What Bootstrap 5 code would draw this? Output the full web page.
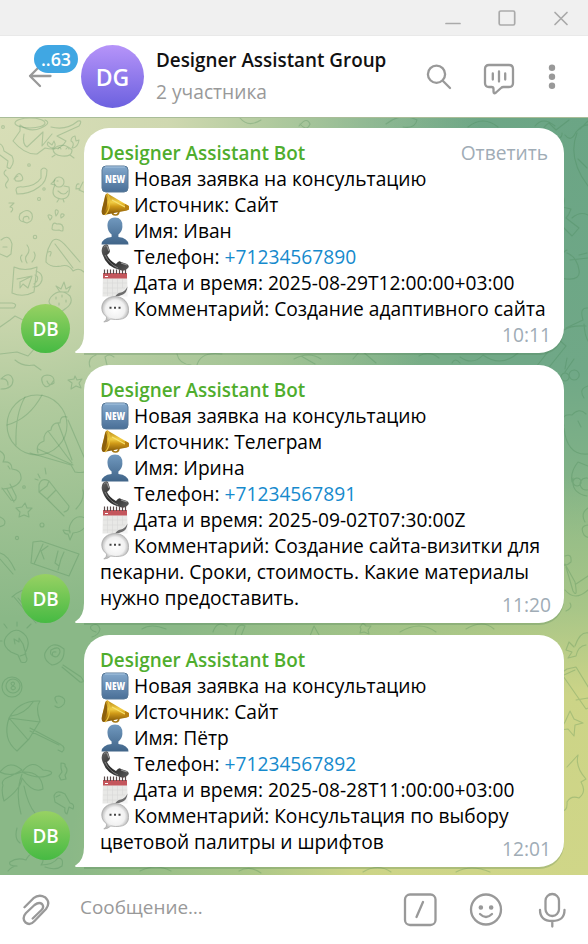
<!DOCTYPE html>
<html lang="ru">
<head>
<meta charset="utf-8">
<meta name="viewport" content="width=device-width, initial-scale=1">
<title>Designer Assistant Group</title>
<link href="https://cdn.jsdelivr.net/npm/bootstrap@5.3.0/dist/css/bootstrap.min.css" rel="stylesheet">
<style>
body{font-family:"Open Sans","Noto Sans",sans-serif;font-size:19.2px;line-height:26px;color:#000;background:#fff}
.app{width:588px;height:944px}
.titlebar{height:36px;background:#f0f0f0;border-bottom:1px solid #e9e9e9;padding-right:18px;gap:36px}
.topbar{height:81px;padding-left:28px;padding-right:32px}
.back{width:53px;height:63px}
.unread{left:6px;top:0;width:44px;height:28px;border-radius:14px;background:#40a7e3;color:#fff;font-size:17.8px;line-height:29px;font-weight:600}
.ava-lg{width:63px;height:63px;background:linear-gradient(#b694f9,#6c61df);color:#fff;font-size:23px;font-weight:600}
.ttl{font-weight:600;font-size:18.85px;line-height:31px;color:#111}
.sub{color:#999;line-height:31px}
.heading{padding-bottom:2px}
.feed{height:758px;padding:10px 24px 8px 21px;gap:12px;border-top:1px solid #a9bd98;background:
 radial-gradient(ellipse 480px 500px at 0% 0%,#d8deb7 0%,#cfd8b0 35%,rgba(186,207,163,.8) 58%,rgba(150,190,145,0) 100%),
 radial-gradient(ellipse 520px 400px at 100% 100%,#d0d688 0%,#ccd487 45%,rgba(180,203,136,.7) 67%,rgba(140,184,136,0) 100%),
 radial-gradient(ellipse 380px 420px at 100% 0%,#6ba585 0%,#70a887 60%,rgba(125,175,138,0) 100%),#8ab887}
.doodles{left:0;top:0;width:588px;height:757px;fill:none;stroke:#3e7e4d;stroke-opacity:.26;stroke-width:1.1;stroke-linecap:round;stroke-linejoin:round}
.ava{width:49px;height:49px;background:linear-gradient(#98d163,#46ba43);color:#fff;font-size:18.85px;font-weight:600}
.raised{margin-bottom:7px}
.bubble{width:480px;margin-left:14px;padding:12px 16px;border-radius:25px 25px 25px 0;background:#fff;box-shadow:0 2px 0 rgba(70,120,80,.25)}
.roomy{padding-bottom:31px}
.tail{left:-9px;bottom:0;width:10px;height:20px}
.sender{color:#4fad2d;font-weight:600;font-size:18.9px}
.reply,.stamp{color:#a0acb6}
.stamp{right:13px;bottom:5px}
.emo{width:28px;height:28px;margin:-1px 5.5px -1px .5px;vertical-align:top}
.tel{color:#168acd}
.composer{height:69px;padding:0 22px}
.hint{color:#999;margin-left:26px;padding-bottom:5px;font-size:18.9px}
.ico{fill:none;stroke:#999;stroke-width:2.3;stroke-linecap:round;stroke-linejoin:round}
.win{stroke:#aaa;stroke-width:1.7}
.ic-find{margin-right:31px}
.ic-talk{margin-right:33px;margin-top:4px}
.ic-cmd{margin-right:32px}
.ic-smile{margin-right:35px}
</style>
<script src="https://cdn.jsdelivr.net/npm/bootstrap@5.3.0/dist/js/bootstrap.bundle.min.js"></script>
</head>
<body>
<svg width="0" height="0" class="position-absolute">
<defs>
<linearGradient id="gBlue" x2="0" y2="1"><stop stop-color="#83a8cc"/><stop offset="1" stop-color="#4a6f97"/></linearGradient>
<linearGradient id="gMan" x2="0" y2="1"><stop stop-color="#7199bf"/><stop offset="1" stop-color="#406488"/></linearGradient>
<linearGradient id="gGold" x2="0" y2="1"><stop stop-color="#b58414"/><stop offset=".4" stop-color="#f3cf45"/><stop offset=".6" stop-color="#d09a18"/><stop offset="1" stop-color="#7d5208"/></linearGradient>
<linearGradient id="gTel" x2="1" y2="1"><stop stop-color="#656565"/><stop offset=".5" stop-color="#292929"/><stop offset="1" stop-color="#5c5c5c"/></linearGradient>
<radialGradient id="gSay"><stop stop-color="#fff"/><stop offset=".72" stop-color="#f1f1f1"/><stop offset="1" stop-color="#bdbdbd"/></radialGradient>
<symbol id="e-new" viewBox="0 0 28 28"><rect x="1" y="1" width="26" height="26" rx="4" fill="url(#gBlue)" stroke="#587997"/><path d="M4 2h20" stroke="#a8c5e0"/><text x="14" y="18.2" text-anchor="middle" font-family="Open Sans" font-size="10.8" font-weight="800" fill="#fff" textLength="20" lengthAdjust="spacingAndGlyphs">NEW</text></symbol>
<symbol id="e-horn" viewBox="0 0 28 28"><path d="M11 20q0 4 3.500 4t3.500-5" fill="none" stroke="#a57713" stroke-width="1.700"/><path d="M6.500 2.500 27 14.500q1 .5 1 2.500t-2 2.500L3 24Q0 24 1 19L4 5Q4.500 2 6.500 2.500Z" fill="url(#gGold)"/><path d="M4.500 4Q7 8 6 14T2 23Q0 22 1 18Z" fill="#8c600d"/><path d="M6.500 2.500q2.500 4 2 11T4 24" fill="none" stroke="#e9c03a" stroke-width="1.300"/><path d="m11 9 13 7" stroke="#f6e070" stroke-width="1.200"/><path d="m24 13 4 2v3.500l-4 1Z" fill="#b78012"/></symbol>
<symbol id="e-man" viewBox="0 0 28 28"><path d="M14 .5C8 .5 6 5 6.600 10q.4 5 4 7.500v2.500Q1 21 .5 27.500H27.500Q27 21 17.400 20v-2.500q3.600-2.500 4-7.500Q22 .5 14 .5Z" fill="url(#gMan)"/></symbol>
<symbol id="e-tel" viewBox="0 0 28 28"><path d="M2 3Q5 0 7 2l2 6q0 2-3 4 3 6 9 9 3-4 5-2l6 2q3 2 1 4-3 4-8 2Q5 24 1 10 0 6 2 3Z" fill="url(#gTel)"/><path d="M3 4q2-2 3-1M4 12q4 9 13 13" fill="none" stroke="#8b8b8b" stroke-width=".8"/><path d="m6 3 2 5M20 20l6 2" stroke="#929292" stroke-width="1.2"/></symbol>
<symbol id="e-cal" viewBox="0 0 28 28"><path d="M2 4h24l.5 14-9.500 9.500H1.500Z" fill="#e8e8e6"/><path d="M2 4h24v5.500H2Z" fill="#c4565c"/><path d="M3.500 .5v4.500M6.500 .5v4.500M9.500 .5v4.500M12.500 .5v4.500M15.500 .5v4.500M18.500 .5v4.500M21.500 .5v4.500M24.500 .5v4.500" stroke="#5a4a4a" stroke-width="1.200"/><path d="M4 7.500h3" stroke="#fff"/><path d="M2 14h24M2 19h22M2 24h16M6.500 10v17M11.500 10v17M16.500 10v14M21.500 10v9" stroke="#d6d6d6" stroke-width=".6"/><path d="M16 27.500 26.500 18v9.500Z" fill="#f4f4f4"/><path d="M14 27.500q3-4 6-4 4-1 6.500-6-.5 6-4.500 8-4 2-8 2Z" fill="#6e6e6e"/></symbol>
<symbol id="e-say" viewBox="0 0 28 28"><path d="M14 1.500C6 1.500.8 6.500.8 13c0 4 2 7 5 9q0 3-3 5 4 0 7-3 20 3 17.500-12C26 5 20 1.500 14 1.500Z" fill="url(#gSay)" stroke="#aaa" stroke-width=".8"/><path d="M8.500 11.800h2v2h-2ZM13 11.800h2v2h-2ZM17.500 11.800h2v2h-2Z" fill="#444"/></symbol>
</defs>
</svg>
<div class="app d-flex flex-column overflow-hidden">
 <div class="titlebar d-flex justify-content-end align-items-center">
  <svg width="18" height="18" class="ico win"><path d="M2 14.500h14"/></svg>
  <svg width="18" height="18" class="ico win"><rect x="1.200" y="2" width="15.500" height="14" rx="1.500"/></svg>
  <svg width="18" height="18" class="ico win"><path d="m3 3.500 12 12M15 3.500l-12 12"/></svg>
 </div>
 <header class="topbar d-flex align-items-center">
  <div class="back position-relative flex-shrink-0">
   <svg width="26" height="63" class="ico"><path d="M22.500 31H2m10-10L2 31l10 10"/></svg>
   <span class="unread position-absolute text-center">..63</span>
  </div>
  <div class="ava-lg rounded-circle d-flex align-items-center justify-content-center flex-shrink-0">DG</div>
  <div class="heading flex-grow-1 text-nowrap ps-2 ms-1"><div class="ttl">Designer Assistant Group</div><div class="sub">2 участника</div></div>
  <div class="d-flex align-items-center">
   <svg width="26" height="26" class="ico ic-find"><circle cx="10.500" cy="10.200" r="8.600"/><path d="m17 17 7 7"/></svg>
   <svg width="32" height="32" class="ico ic-talk"><path d="M6 2h20q4 0 4 4v14q0 4-4 4h-5.500q-1.500 0-2.500 1l-5 4.500q-2.500 2-2.500-1V26q0-2-2-2H6q-4 0-4-4V6q0-4 4-4ZM9.800 10.500v6m6.200-8v10m6.200-8v6"/></svg>
   <svg width="8" height="26" fill="#999"><circle cx="4" cy="3.700" r="3.200"/><circle cx="4" cy="12.700" r="3.200"/><circle cx="4" cy="21.700" r="3.200"/></svg>
  </div>
 </header>
 <main class="feed d-flex flex-column position-relative">
  <svg class="doodles position-absolute" viewBox="0 118 588 757">
   <g id="left-art">
    <path d="M20 125q10 8 21 3t4-8M20 125v6l-7 10q12 14 24 13l8-6q15 4 21-7l-9-5 22-10q4-6-1-5-12 10-27 6M24 134q-2 10 3 13l16-15-1 14 10-12"/><ellipse cx="30" cy="123" rx="15" ry="5"/>
    <path d="M53 149q10-8 19 1 0 7-10 6-9-1-9-7Zm1 0q-9-3-6-7l4 3 2-4q3 6-2 7m20 0q3-5-1-7 0-4 4-5l1 5 3-1q-1 7-6 8M55 155l-3 2m18-2 4 3M58 149q2-3 3 0m5 0q2-3 3 0"/>
    <path d="M0 144q3 1 4 7l8 5q3 6-1 11-1 3-4 0l1-6-8-6M6 170q-4 3 0 6t1 6 0 6M14 179q5-9 8-3t-6 5q-3-3 2-5M16 190q0-4 7-3 13-1 18-9v-8q3-4 6 0 0 12-8 17-9 7-22 7ZM79 184q-3-1-3 5 4-1 4 1M83 182l-4 8 7 3"/>
    <circle cx="59" cy="182" r="5"/><path d="M55 180l-4 4 4 1q-6 12 6 14 10 0 8-12l-5-1M58 191q6 6 10 0M59 199l-2 3m6-3 1 3M57 181h1"/>
    <path d="M9 203h5l-4 4q5 1 1 5M24 222q-7-1-4-8 8-7 12 0 2 7-5 9-6-1-3-6 5-2 5 2M52 229q0-8 5-5 7-1 6 6 0 2-4 0-6 1-7-1ZM50 220q-4-6 0-5t0 5Zm6-4q-2-7 1-6t-1 6Zm5 2q-1-5 2-4t-2 4Z"/>
    <circle cx="3" cy="127" r="1.400"/><circle cx="29" cy="165" r="1.300"/><circle cx="44" cy="189" r="1.200"/><circle cx="39" cy="199" r="1.500"/><circle cx="35" cy="237" r="1.700"/>
    <path d="M1 240q8-7 11 4l-1 10-4 3-7-3m3-7h4M46 262q0-11 5-19 5-9 16 4l13 15M48 252q5-2 2 4m5-12 18 24M46 262q5 6 15 4 8-2 12 5 6-4 11 1M22 262q-3-5 0-7m5 8q-3-5 0-8 4-5 0-10m5 17q5-5 2-10"/>
    <path d="M14 267q11 5 23 0l-3 25q-11 6-22 1Zm22 4q7 2 6 9-2 7-9 7m2-12q4 1 2 6l-3 3M17 279l15-3-4 12-5-4-3 4v-6l12-6"/>
    <path d="M51 305q-4-3 0-8 9-10 19-1 4 7-5 13-9 8-14-4ZM60 292l-4-6 5 3 3-7 2 7 5-3-3 6ZM56 297v2m6-4v2m4 3v2m-7 1v2M0 303h12q6 1 2 5H0M0 327l10-7 5-4 8 4 8-4 2 10 7-3 2 9q12 2 8 12-6 7-14 3l-8 9-11-4-17 2"/>
    <path d="M15 360q8 7 19 5l7 5M1 379q9-9 12 1 0 9-12 9m0-10q7-1 7 6M54 380q-7 11-11 4-4-8 4-9 8 0 7 8-5 4-7-2M75 376l2 4 5-1-3 4 2 5-5-2-5 3 1-6-4-3 6-1Z"/>
    <circle cx="37" cy="425" r="30"/><path d="M7 425q22-6 35-30M16 445q-1-31 9-48m13 56q-3-9 6-12-1-9 7-11 1-8 9-7 0-8 7-6m1 3 16 37M58 423l14 37M48 431l24 32M38 449l35 16M30 453l41 12 4 7q7 1 9 0"/>
    <path d="M0 451q7 4 3 11 9-1 9 7 10 1 9 10-3 9-19 10m5 0 7 13m-4-18 6 12q1 6-5 4l-9-12m6-22 2 3M39 485q2-8 10-4l-2 5-8 6Zm0 7 8 7 9-9-7-9m-2 18 17 17m-8-26 13 16q0 5-5 6M38 474l2 4m5-10 1 6m-11 5 3 1"/>
    <path d="M25 503l2 5 5 0-4 4 1 5-5-2-5 2 1-5-4-4 6-1ZM83 490q2 10-7 19M70 531l-7-1q2 5 5 4l2 6 3-7q16-2 12-15-9-4-14 5-3 5-1 10ZM33 542l8-1 38 13-10 22-38-13Zm10 2-9 20m14-18-7 5 3 8m14-8-3 12 4 3m5-14-3 7-3 11M0 553q8 2 15 17m-15-11 13 15M0 517q7 3 4 8-7 4-5-2M12 597q8-8 22-9m-20 9 22 26m-18-25 20 24"/><circle cx="42" cy="525" r="2"/><circle cx="24" cy="487" r="1.300"/><circle cx="17" cy="538" r="1.600"/>
    <path d="M11 652q-10-7-5-15 10-13 20-1 5 7-1 17l2 6q0 5-6 3l-3-7Zm4-8-1-5 5 3v-4l4 6 2 7m-5 5 6-2M17 622v4M4 624l3 4m24-4-4 4M2 641H0M52 665q-9-5-7-12 7-14 19-4 1 14-12 16Zm4-8q-7-1-5-7 9-5 9 2-2 7-7 4-2-5 3-4M62 667l18 15q6 1 1-5l-18-12"/>
    <circle cx="12" cy="687" r="10"/><circle cx="13" cy="686" r="7"/><path d="M13 682q3 1 0 4 5 2 0 4-4-2 0-4-4-3 0-4M57 703q-5-7 2-7 8 2 5 8-5 6-9 2M9 718q10-18 31-17-5 6 0 20l-11 18-12 12Q2 739 9 718Zm0 0 31 4M9 718l19 22M11 716q14-2 22-14M30 728l30 16q7 4 2 8l-4-2M30 731l29 14"/>
    <path d="M22 770q-12-11-22 2 9 5 22 0 10-14 21-2 11 1 8 4-11 7-29-2 20-1 21 17-10 5-21-11-1 11-18 23-3-10-1-16-3-5 8-9ZM22 774q-7 19-1 40m3-28q4 19 11 27M61 763q5 0 4 3 4 4 0 9l1 4-5 1-2-4 3-4-1-4ZM54 796q2-7 11-2l5 9q5 1 3 6l-4-2-2 7q-3-1-2-6l-10-6Zm2 1 4-2M17 828q-3 11 3 15M8 871q4-5 9-5-9 0-7-4 7-5 16-2 5-10 13-5 7 4 2 10 12 0 17-7 6 0 4 8-6 5-17 1"/>
   </g>
   <g id="right-art">
    <path d="M548 145q-11-15 1-22l7 7 13-10m-18 21q12-2 11-8M565 135q6 8 11-3 7-8 13-7M577 133q-10 25 11 53M580 129q8-8 8-8m-10 38 9 9M555 193q6 6 2 16m3-16q8 7 1 17M542 221l10-5 10-9 9 2q-2 6-5 9l13 10-7 8-11-11-5 10q-4 4-6-1l5-12-15 2ZM572 218q8-7 16-3M567 250q-6 3-5 9-4 4 0 10-3 10 5 10 14 1 12-9-2-13-12-17m12 2 8-2M588 258l-18 2"/>
    <path d="M564 330q7-5 22-4M566 328l17-8q-4-13 5-12m-4 16q1 14 5 18M558 339l8 7-20 25-10-4ZM574 359l-9 13m2-14-2 11m0 4a4 4 0 1 0 .1 0m9-3a5 5 0 1 0 .1 0M588 386q-10 3-4 12M564 426q-4-13 8-11 7-8 14-1M564 428q3 28 24 26M578 421l3 6M572 482q-2-10 6-20l10 4M573 478q-2 15 14 18m-10-18a4 4 0 1 0 .1 0m9 0a6 6 0 1 0 .1 0"/>
    <path d="M565 556q7-3 6 6-5 5-10 2m5 3 7 24q5 8 2-9l-10-18m11 20 12-8m-23 14q10 12 23 0M588 508q-8 5-3 14m3 3q-9 1-4 10 5 5 10 0M566 611q7-3 4-8M575 646q5-15 14-13m-15 14-5-5-3 8 6 2-4 6 8-2q2-10 10-11M567 669l9-2 22 36-12 6-25-36ZM564 675l11-5m1 30 12-2M570 711l4 8 9 4-8 2-1 11-6-7-8 1 5-8ZM567 767l11-12q-3 12 8 24l-5 3q6 10-2 16-8-3-12 4 1 11-8 8"/>
   </g>
   <g id="gap-art"><path d="M240 118q8 10 21 2M299 126q8-10 11-2-3 8-10 0m86 0q15-12 31-4-2 9-14 7m65 0q15-12 30 0m37-1q8-10 20 0M96 355q-9 3-6 12m24-10q-5-4-9 0l2 8M177 354q2 10 14 11M197 365q4-14 25-11M294 359q15-8 27 0M301 356l14 8M353 359l8-9 15 13m43-7q10-6 20 2m13 5q3-6 8 0M460 357q13 9 23-2 18 13 35-2M96 632q-7-2-5-6 7-4 9 3-1 6-8 8M213 632q4-12 14-6m8 10q2-14 10-10l-4 10M310 636l4-10 5 9M360 627l3-4 3 3 5 0-3 4 1 4-5-2-4 1 1-4ZM400 632q20-12 36 0m30-3q17-10 28 0M142 629q9-6 24 0M140 871q16-8 31 0m68 0q11-6 22 2m102-1q15-9 28 0m65 0q15-8 34 0"/></g>
  </svg>

  <article class="d-flex align-items-end position-relative">
   <div class="ava rounded-circle d-flex align-items-center justify-content-center">DB</div>
   <div class="bubble roomy position-relative text-nowrap">
    <svg class="tail position-absolute" viewBox="0 0 10 20"><path d="M9 0H10V20H1Q-1 19 1 18 9 13 9 0Z" fill="#fff"/></svg>
    <div class="d-flex justify-content-between"><span class="sender">Designer Assistant Bot</span><span class="reply">Ответить</span></div>
    <div><svg class="emo"><use href="#e-new"/></svg>Новая заявка на консультацию</div>
    <div><svg class="emo"><use href="#e-horn"/></svg>Источник: Сайт</div>
    <div><svg class="emo"><use href="#e-man"/></svg>Имя: Иван</div>
    <div><svg class="emo"><use href="#e-tel"/></svg>Телефон: <span class="tel">+71234567890</span></div>
    <div><svg class="emo"><use href="#e-cal"/></svg>Дата и время: 2025-08-29T12:00:00+03:00</div>
    <div><svg class="emo"><use href="#e-say"/></svg>Комментарий: Создание адаптивного сайта</div>
    <span class="stamp position-absolute">10:11</span>
   </div>
  </article>
  <article class="d-flex align-items-end position-relative">
   <div class="ava rounded-circle d-flex align-items-center justify-content-center">DB</div>
   <div class="bubble position-relative text-nowrap">
    <svg class="tail position-absolute" viewBox="0 0 10 20"><path d="M9 0H10V20H1Q-1 19 1 18 9 13 9 0Z" fill="#fff"/></svg>
    <div class="sender">Designer Assistant Bot</div>
    <div><svg class="emo"><use href="#e-new"/></svg>Новая заявка на консультацию</div>
    <div><svg class="emo"><use href="#e-horn"/></svg>Источник: Телеграм</div>
    <div><svg class="emo"><use href="#e-man"/></svg>Имя: Ирина</div>
    <div><svg class="emo"><use href="#e-tel"/></svg>Телефон: <span class="tel">+71234567891</span></div>
    <div><svg class="emo"><use href="#e-cal"/></svg>Дата и время: 2025-09-02T07:30:00Z</div>
    <div><svg class="emo"><use href="#e-say"/></svg>Комментарий: Создание сайта-визитки для<br>пекарни. Сроки, стоимость. Какие материалы<br>нужно предоставить.</div>
    <span class="stamp position-absolute">11:20</span>
   </div>
  </article>
  <article class="d-flex align-items-end position-relative">
   <div class="ava raised rounded-circle d-flex align-items-center justify-content-center">DB</div>
   <div class="bubble position-relative text-nowrap">
    <svg class="tail position-absolute" viewBox="0 0 10 20"><path d="M9 0H10V20H1Q-1 19 1 18 9 13 9 0Z" fill="#fff"/></svg>
    <div class="sender">Designer Assistant Bot</div>
    <div><svg class="emo"><use href="#e-new"/></svg>Новая заявка на консультацию</div>
    <div><svg class="emo"><use href="#e-horn"/></svg>Источник: Сайт</div>
    <div><svg class="emo"><use href="#e-man"/></svg>Имя: Пётр</div>
    <div><svg class="emo"><use href="#e-tel"/></svg>Телефон: <span class="tel">+71234567892</span></div>
    <div><svg class="emo"><use href="#e-cal"/></svg>Дата и время: 2025-08-28T11:00:00+03:00</div>
    <div><svg class="emo"><use href="#e-say"/></svg>Комментарий: Консультация по выбору<br>цветовой палитры и шрифтов</div>
    <span class="stamp position-absolute">12:01</span>
   </div>
  </article>
 </main>
 <footer class="composer d-flex align-items-center">
  <svg width="30" height="34" class="ico me-n1"><path d="M2.500 14.200 11.500 5.200Q17 .9 23 4.200 29 9.500 24 16L12.500 28Q8 33 3.500 29.500-.5 25 4 20L12.500 12Q17 8.500 20 11 22.500 14 19.500 17L10.700 25.500"/></svg>
  <span class="hint flex-grow-1 ms-4 ps-1">Сообщение…</span>
  <svg width="34" height="34" class="ico ic-cmd"><rect x="2" y="1.500" width="30.500" height="30.500" rx="5"/><path d="m20 9-6.500 15"/></svg>
  <svg width="34" height="34" class="ico ic-smile"><circle cx="17" cy="16.500" r="15"/><path d="M11 21q6 6 12 0"/><path d="M11.800 14.500h.1m10.200 0h.1" stroke-width="4.500"/></svg>
  <svg width="28" height="36" class="ico"><rect x="7.500" y="2" width="13.500" height="22" rx="6.700"/><path d="M2 18q0 11 12.300 11T26.500 18M14.300 29v5.500"/></svg>
 </footer>
</div>
</body>
</html>
